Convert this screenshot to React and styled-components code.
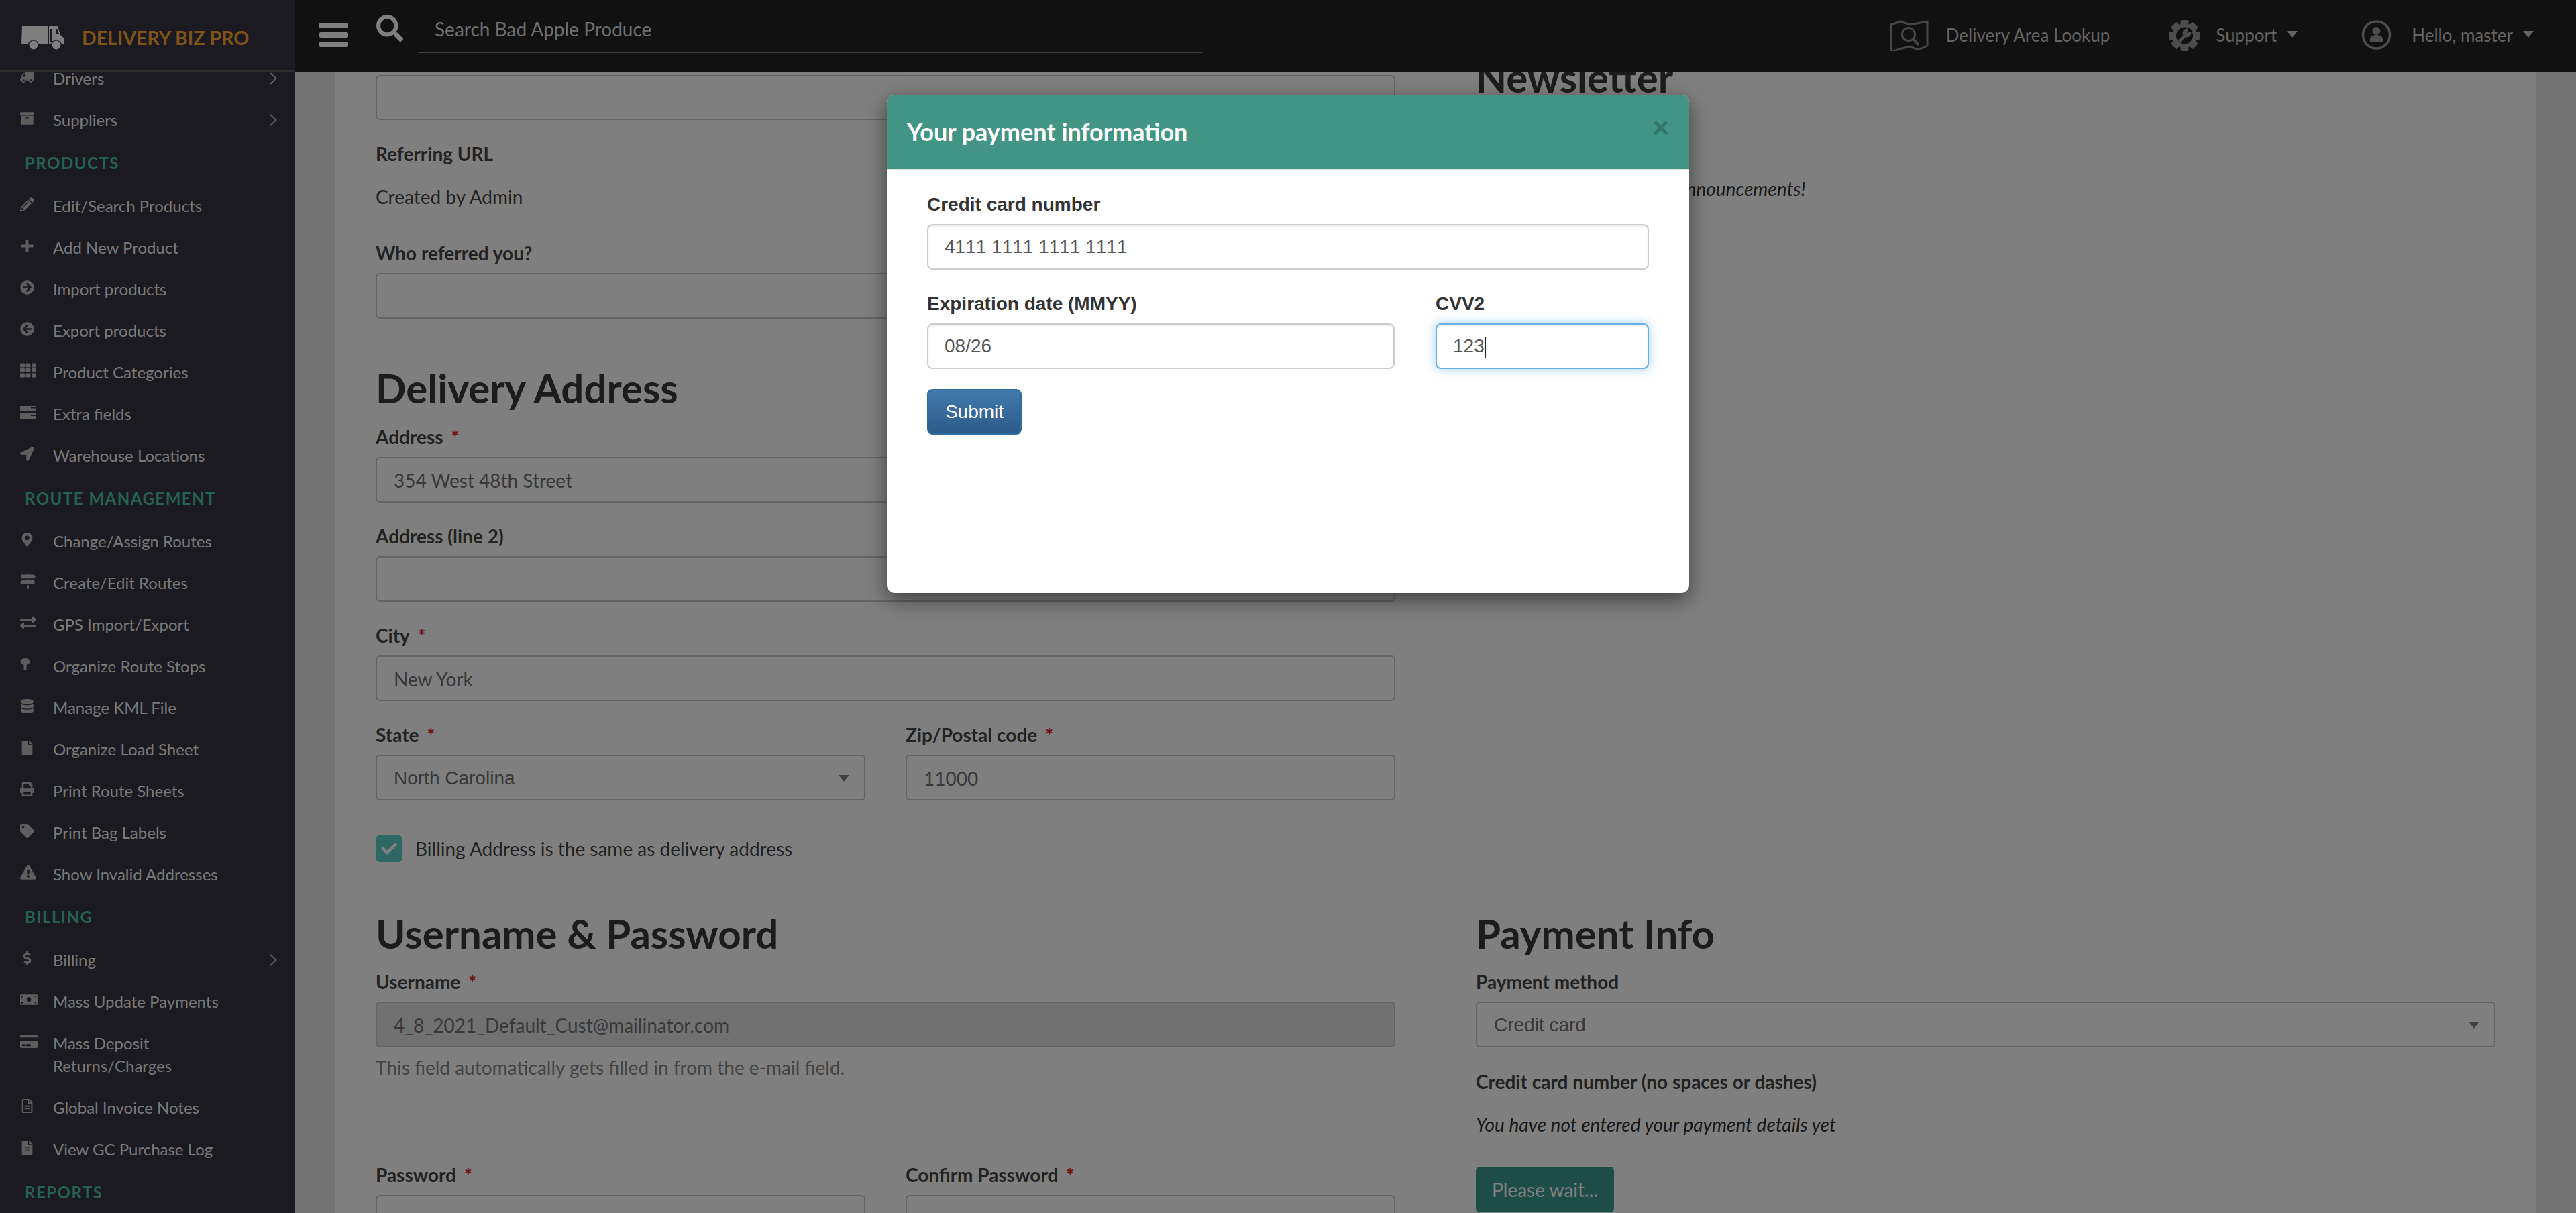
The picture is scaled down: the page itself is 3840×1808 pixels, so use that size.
import React from 'react'
import styled, {createGlobalStyle} from 'styled-components'
import {
	FaPencilAlt, FaPlus, FaArrowCircleRight, FaArrowCircleLeft, FaTh, FaLocationArrow,
	FaMapMarkerAlt, FaMapSigns, FaExchangeAlt, FaDatabase, FaFile, FaPrint, FaTag,
	FaExclamationTriangle, FaDollarSign, FaMoneyBill, FaCreditCard, FaRegFileAlt, FaFileAlt,
	FaTruck, FaArchive, FaSearch, FaCheck,
} from 'react-icons/fa'

const GlobalStyle = createGlobalStyle`
	html, body { margin:0; padding:0; background:#e6e6e6; }
	* { box-sizing:border-box; }
	body { font-family:Lato, "Liberation Sans", sans-serif; }
`

const FieldsIcon = () => (
	<svg width="24" height="19" viewBox="0 0 24 19" fill="currentColor">
		<path d="M0 0h24v8H0zM0 11h24v8H0z" />
		<path d="M16 1.500h7v2h-7zM16 13h7v2h-7z" fill="#343440" />
	</svg>
)

const PinIcon = () => (
	<svg width="15" height="18" viewBox="0 0 15 18" fill="currentColor">
		<ellipse cx="7.500" cy="5" rx="7" ry="5" />
		<path d="M5.500 9h4v9h-4z" />
	</svg>
)

const MenuChevron = () => (
	<svg width="11" height="18" viewBox="0 0 11 18" fill="none" stroke="currentColor" strokeWidth="2">
		<path d="M1 1l8.500 8L1 17" />
	</svg>
)

const TruckLogo = () => (
	<svg width="64" height="36" viewBox="0 0 64 36" fill="#ffffff">
		<path d="M1 1h38v27H26a8.500 8.500 0 0 0-16.400 0H0z" />
		<path d="M41 1h13l4 13 6 5v9h-4a8.500 8.500 0 0 0-16.400 0H41z" />
		<path d="M46 5h-3v19h3zM51 5v8h5l-2.500-8z" fill="#343440" />
		<circle cx="18" cy="29" r="6.500" />
		<circle cx="52" cy="29" r="6.500" />
	</svg>
)

const MapSearchIcon = () => (
	<svg width="58" height="46" viewBox="0 0 58 46" fill="none" stroke="#8c8c8c" strokeWidth="3">
		<path d="M2 7l14-5 14 5 26-5v36l-13 6-14-5-14 4-13 4z" strokeLinejoin="round" />
		<circle cx="28" cy="21" r="9.500" />
		<path d="M35 28l8 9" strokeWidth="4" />
	</svg>
)

const GearIcon = () => (
	<svg width="47" height="46" viewBox="0 0 47 46">
		<g fill="currentColor">
			<circle cx="23.500" cy="23" r="18" />
			{[0,45,90,135,180,225,270,315].map((a)=>(
				<rect key={a} x="17.500" y="0" width="12" height="10" rx="2" transform={`rotate(${a} 23.500 23)`} />
			))}
		</g>
		<circle cx="23.500" cy="23" r="12.500" fill="#222" />
		<path d="M15 32l10-10" stroke="currentColor" strokeWidth="5" />
		<circle cx="27" cy="19" r="6.500" fill="currentColor" />
		<path d="M27 19l3-8 6 5z" fill="#222" />
	</svg>
)

const UserIcon = () => (
	<svg width="45" height="44" viewBox="0 0 45 44">
		<circle cx="22.500" cy="22" r="20" fill="none" stroke="currentColor" strokeWidth="3.500" />
		<circle cx="22.500" cy="16" r="6" fill="currentColor" />
		<path fill="currentColor" d="M13 32v-4c0-4 4-6 9.500-6s9.500 2 9.500 6v4z" />
	</svg>
)

const menu = [
	{label:'Drivers', Icon:FaTruck, arrow:true, flip:true},
	{label:'Suppliers', Icon:FaArchive, arrow:true},
	{head:'PRODUCTS'},
	{label:'Edit/Search Products', Icon:FaPencilAlt},
	{label:'Add New Product', Icon:FaPlus},
	{label:'Import products', Icon:FaArrowCircleRight},
	{label:'Export products', Icon:FaArrowCircleLeft},
	{label:'Product Categories', Icon:FaTh, size:24},
	{label:'Extra fields', Icon:FieldsIcon},
	{label:'Warehouse Locations', Icon:FaLocationArrow},
	{head:'ROUTE MANAGEMENT'},
	{label:'Change/Assign Routes', Icon:FaMapMarkerAlt},
	{label:'Create/Edit Routes', Icon:FaMapSigns, size:23},
	{label:'GPS Import/Export', Icon:FaExchangeAlt, size:24},
	{label:'Organize Route Stops', Icon:PinIcon},
	{label:'Manage KML File', Icon:FaDatabase},
	{label:'Organize Load Sheet', Icon:FaFile},
	{label:'Print Route Sheets', Icon:FaPrint},
	{label:'Print Bag Labels', Icon:FaTag},
	{label:'Show Invalid Addresses', Icon:FaExclamationTriangle, size:24},
	{head:'BILLING'},
	{label:'Billing', Icon:FaDollarSign, arrow:true},
	{label:'Mass Update Payments', Icon:FaMoneyBill, size:26},
	{label:'Mass Deposit Returns/Charges', Icon:FaCreditCard, size:26},
	{label:'Global Invoice Notes', Icon:FaRegFileAlt},
	{label:'View GC Purchase Log', Icon:FaFileAlt},
	{head:'REPORTS'},
]

export default function App(){
	return(
		<Page>
			<GlobalStyle />
			<Brand>
				<TruckLogo />
				<BrandName>DELIVERY BIZ PRO</BrandName>
			</Brand>
			<TopBar>
				<Burger><span /><span /><span /></Burger>
				<SearchGlass><FaSearch /></SearchGlass>
				<SearchBox>Search Bad Apple Produce</SearchBox>
				<TopLinks>
					<TopLink gap={26}><MapSearchIcon />Delivery Area Lookup</TopLink>
					<TopLink gap={23}><GearIcon />Support<Caret /></TopLink>
					<TopLink gap={30}><UserIcon />Hello, master<Caret /></TopLink>
				</TopLinks>
			</TopBar>

			<Sidebar>
				<MenuList>
					{menu.map((m,i)=> m.head ?
						<MenuHead key={i}>{m.head}</MenuHead> :
						<MenuItem key={i}>
							<MenuIcon $size={m.size} $flip={m.flip}><m.Icon /></MenuIcon>
							<MenuLabel>{m.label}</MenuLabel>
							{m.arrow && <MenuArrow><MenuChevron /></MenuArrow>}
						</MenuItem>
					)}
				</MenuList>
			</Sidebar>

			<Main>
				<Panel>
					<Column>
						<Input defaultValue="" readOnly style={{height:67}} />
						<Label top={30}>Referring URL</Label>
						<Static top={14}>Created by Admin</Static>
						<Label top={44}>Who referred you?</Label>
						<Input defaultValue="" readOnly />

						<Heading top={63}>Delivery Address</Heading>
						<Label top={13}>Address<Required>*</Required></Label>
						<Input defaultValue="354 West 48th Street" readOnly />
						<Label top={30}>Address (line 2)</Label>
						<Input defaultValue="" readOnly />
						<Label top={30}>City<Required>*</Required></Label>
						<Input defaultValue="New York" readOnly />
						<Halves>
							<div>
								<Label>State<Required>*</Required></Label>
								<Select>North Carolina<SelectCaret /></Select>
							</div>
							<div>
								<Label>Zip/Postal code<Required>*</Required></Label>
								<Input defaultValue="11000" readOnly />
							</div>
						</Halves>
						<CheckRow>
							<CheckBox><FaCheck /></CheckBox>
							Billing Address is the same as delivery address
						</CheckRow>

						<Heading top={66}>Username &amp; Password</Heading>
						<Label top={12}>Username<Required>*</Required></Label>
						<Input defaultValue="4_8_2021_Default_Cust@mailinator.com" readOnly disabled />
						<Help>This field automatically gets filled in from the e-mail field.</Help>
						<Halves top={120}>
							<div>
								<Label>Password<Required>*</Required></Label>
								<Input defaultValue="" readOnly />
							</div>
							<div>
								<Label>Confirm Password<Required>*</Required></Label>
								<Input defaultValue="" readOnly />
							</div>
						</Halves>
					</Column>

					<Column>
						<Heading top={-37}>Newsletter</Heading>
						<NewsText>Receive all of our product announcements!</NewsText>
						<Heading top={1050}>Payment Info</Heading>
						<Label top={12}>Payment method</Label>
						<Select>Credit card<SelectCaret /></Select>
						<Label top={31}>Credit card number (no spaces or dashes)</Label>
						<NoDetails>You have not entered your payment details yet</NoDetails>
						<WaitButton>Please wait...</WaitButton>
					</Column>
				</Panel>
			</Main>

			<Backdrop>
				<Modal>
					<ModalHeader>
						<ModalTitle>Your payment information</ModalTitle>
						<CloseX>×</CloseX>
					</ModalHeader>
					<ModalBody>
						<ModalLabel>Credit card number</ModalLabel>
						<ModalInput defaultValue="4111 1111 1111 1111" readOnly />
						<ModalRow>
							<div>
								<ModalLabel>Expiration date (MMYY)</ModalLabel>
								<ModalInput defaultValue="08/26" readOnly />
							</div>
							<div>
								<ModalLabel>CVV2</ModalLabel>
								<ModalInput as="div" $focused>123<TextCursor /></ModalInput>
							</div>
						</ModalRow>
						<SubmitButton>Submit</SubmitButton>
					</ModalBody>
				</Modal>
			</Backdrop>
		</Page>
	)
}

const Page = styled.div`
	position:relative;
	width:3840px;
	height:1808px;
	overflow:hidden;
	display:grid;
	grid-template-columns:440px 1fr;
	grid-template-rows:108px 1fr;
	background:#e6e6e6;
`
const Brand = styled.div`
	display:flex;
	align-items:center;
	gap:26px;
	padding:6px 0 0 32px;
	background:#343440;
	border-bottom:3px solid #5a5a5a;
`
const BrandName = styled.div`
	color:#fea830;
	font-size:28.500px;
	font-weight:700;
`
const TopBar = styled.div`
	display:flex;
	align-items:flex-start;
	background:#222;
	color:#cfcfcf;
`
const Burger = styled.div`
	display:flex;
	flex-direction:column;
	gap:6px;
	width:43px;
	margin:34px 0 0 36px;
	span {
		height:8px;
		border-radius:2px;
		background:#fff;
	}
`
const SearchGlass = styled.div`
	margin:22px 0 0 42px;
	font-size:40px;
	line-height:1;
	color:#fff;
`
const SearchBox = styled.div`
	width:1169px;
	height:55px;
	margin:24px 0 0 22px;
	padding:0 0 0 25px;
	border-bottom:2px solid #7c8288;
	font-size:28px;
	line-height:38px;
	color:#dcdcdc;
`
const TopLinks = styled.div`
	display:flex;
	gap:88px;
	margin:30px 0 0 auto;
	padding-right:63px;
`
const TopLink = styled.div`
	display:flex;
	align-items:flex-start;
	height:46px;
	font-size:26px;
	line-height:44px;
	color:#c8c8c8;
	&:last-child { margin-left:7px; }
	svg {
		flex:none;
		margin-right:${(p)=>p.gap}px;
		color:#9a9a9a;
	}
`
const Caret = styled.span`
	width:0;
	height:0;
	margin:16px 0 0 15px;
	border-left:8px solid transparent;
	border-right:8px solid transparent;
	border-top:10px solid #c8c8c8;
`
const Sidebar = styled.div`
	background:#343440;
	overflow:hidden;
`
const MenuList = styled.div`
	margin-top:-22px;
`
const MenuHead = styled.div`
	height:66px;
	padding-left:37px;
	font-size:24px;
	font-weight:700;
	letter-spacing:1.500px;
	line-height:66px;
	color:#4ac2aa;
`
const MenuItem = styled.div`
	position:relative;
	display:flex;
	min-height:62px;
	padding:14px 70px 14px 30px;
	color:#f0f0f0;
`
const MenuIcon = styled.div`
	flex:none;
	width:49px;
	height:24px;
	display:flex;
	align-items:center;
	margin-top:2px;
	font-size:${(p)=>p.$size || 21}px;
	color:#bcbcbc;
	svg { transform:${(p)=>p.$flip ? 'scaleX(-1)' : 'none'}; }
`
const MenuLabel = styled.div`
	font-size:24px;
	line-height:34px;
`
const MenuArrow = styled.div`
	position:absolute;
	top:22px;
	left:402px;
	color:#bcbcbc;
`
const Main = styled.div`
	overflow:hidden;
	padding:0 60px;
`
const Panel = styled.div`
	display:grid;
	grid-template-columns:1520px 1520px;
	column-gap:120px;
	align-items:start;
	height:1700px;
	padding:4px 60px 0;
	background:#fff;
`
const Column = styled.div`
	display:flex;
	flex-direction:column;
`
const Label = styled.div`
	margin:${(p)=>p.top || 0}px 0 10px;
	font-size:28px;
	font-weight:700;
	line-height:40px;
	color:#444;
`
const Required = styled.span`
	margin-left:12px;
	color:#e02020;
`
const Static = styled.div`
	margin-top:${(p)=>p.top || 0}px;
	font-size:28px;
	line-height:40px;
	color:#444;
`
const Input = styled.input`
	display:block;
	width:100%;
	height:68px;
	padding:2px 25px 0;
	border:2px solid #c8c8c8;
	border-radius:6px;
	background:${(p)=>p.disabled ? '#e2e2e2' : '#fff'};
	font-family:Lato, sans-serif;
	font-size:28px;
	color:#707070;
	outline:none;
	opacity:1;
`
const Select = styled.div`
	position:relative;
	width:100%;
	height:68px;
	padding:0 25px;
	border:2px solid #c8c8c8;
	border-radius:6px;
	font-family:"Liberation Sans", sans-serif;
	font-size:28px;
	line-height:66px;
	color:#707070;
`
const SelectCaret = styled.span`
	position:absolute;
	top:28px;
	right:22px;
	width:0;
	height:0;
	border-left:8px solid transparent;
	border-right:8px solid transparent;
	border-top:10px solid #808080;
`
const Heading = styled.h2`
	margin:${(p)=>p.top || 0}px 0 0;
	font-size:60px;
	font-weight:700;
	line-height:80px;
	color:#383838;
`
const Halves = styled.div`
	display:grid;
	grid-template-columns:730px 730px;
	column-gap:60px;
	margin-top:${(p)=>p.top || 30}px;
`
const CheckRow = styled.div`
	display:flex;
	align-items:center;
	gap:19px;
	margin-top:52px;
	font-size:28px;
	line-height:40px;
	color:#444;
`
const CheckBox = styled.div`
	display:flex;
	align-items:center;
	justify-content:center;
	width:40px;
	height:40px;
	border-radius:6px;
	background:#5cd0c8;
	color:#fff;
	font-size:24px;
`
const Help = styled.div`
	margin-top:10px;
	font-size:28px;
	line-height:40px;
	color:#888;
`
const NewsText = styled.div`
	margin-top:106px;
	font-size:28px;
	font-style:italic;
	line-height:40px;
	color:#333;
`
const NoDetails = styled.div`
	margin-top:14px;
	font-size:28px;
	font-style:italic;
	line-height:40px;
	color:#333;
`
const WaitButton = styled.div`
	width:206px;
	height:68px;
	margin-top:43px;
	border-radius:6px;
	background:#3c9a8e;
	color:#fff;
	font-size:28px;
	line-height:68px;
	text-align:center;
`
const Backdrop = styled.div`
	position:absolute;
	top:0;
	right:0;
	bottom:0;
	left:0;
	background:rgba(0,0,0,0.5);
`
const Modal = styled.div`
	width:1196px;
	height:743px;
	margin:141px auto 0;
	border-radius:12px;
	background:#fff;
	overflow:hidden;
	box-shadow:0 10px 30px rgba(0,0,0,0.5);
`
const ModalHeader = styled.div`
	position:relative;
	height:113px;
	padding:0 30px;
	border-bottom:2px solid #e5e5e5;
	background:#429585;
`
const ModalTitle = styled.div`
	font-size:36px;
	font-weight:700;
	line-height:111px;
	color:#fff;
`
const CloseX = styled.div`
	position:absolute;
	top:26px;
	right:30px;
	font-family:"Liberation Sans", sans-serif;
	font-size:42px;
	font-weight:700;
	line-height:48px;
	color:#2f7568;
`
const ModalBody = styled.div`
	padding:30px 60px;
`
const ModalLabel = styled.div`
	margin-bottom:10px;
	padding-top:1px;
	height:40px;
	font-family:"Liberation Sans", sans-serif;
	font-size:28px;
	font-weight:700;
	line-height:40px;
	color:#333;
`
const ModalInput = styled.input`
	display:block;
	width:100%;
	height:68px;
	margin-bottom:30px;
	padding:0 24px;
	border:2px solid ${(p)=>p.$focused ? '#66afe9' : '#ccc'};
	border-radius:8px;
	box-shadow:${(p)=>p.$focused ? '0 0 16px rgba(102,175,233,0.6), inset 0 2px 2px rgba(0,0,0,0.075)' : 'inset 0 2px 2px rgba(0,0,0,0.075)'};
	font-family:"Liberation Sans", sans-serif;
	font-size:28px;
	font-kerning:none;
	line-height:64px;
	color:#555;
	outline:none;
`
const TextCursor = styled.span`
	display:inline-block;
	width:2px;
	height:32px;
	vertical-align:middle;
	background:#222;
`
const ModalRow = styled.div`
	display:grid;
	grid-template-columns:697px 1fr;
	column-gap:61px;
`
const SubmitButton = styled.div`
	width:141px;
	height:68px;
	border:2px solid #2e6da4;
	border-radius:8px;
	background:linear-gradient(#4279ad, #2c5a88);
	font-family:"Liberation Sans", sans-serif;
	font-size:28px;
	line-height:64px;
	text-align:center;
	color:#fff;
`
